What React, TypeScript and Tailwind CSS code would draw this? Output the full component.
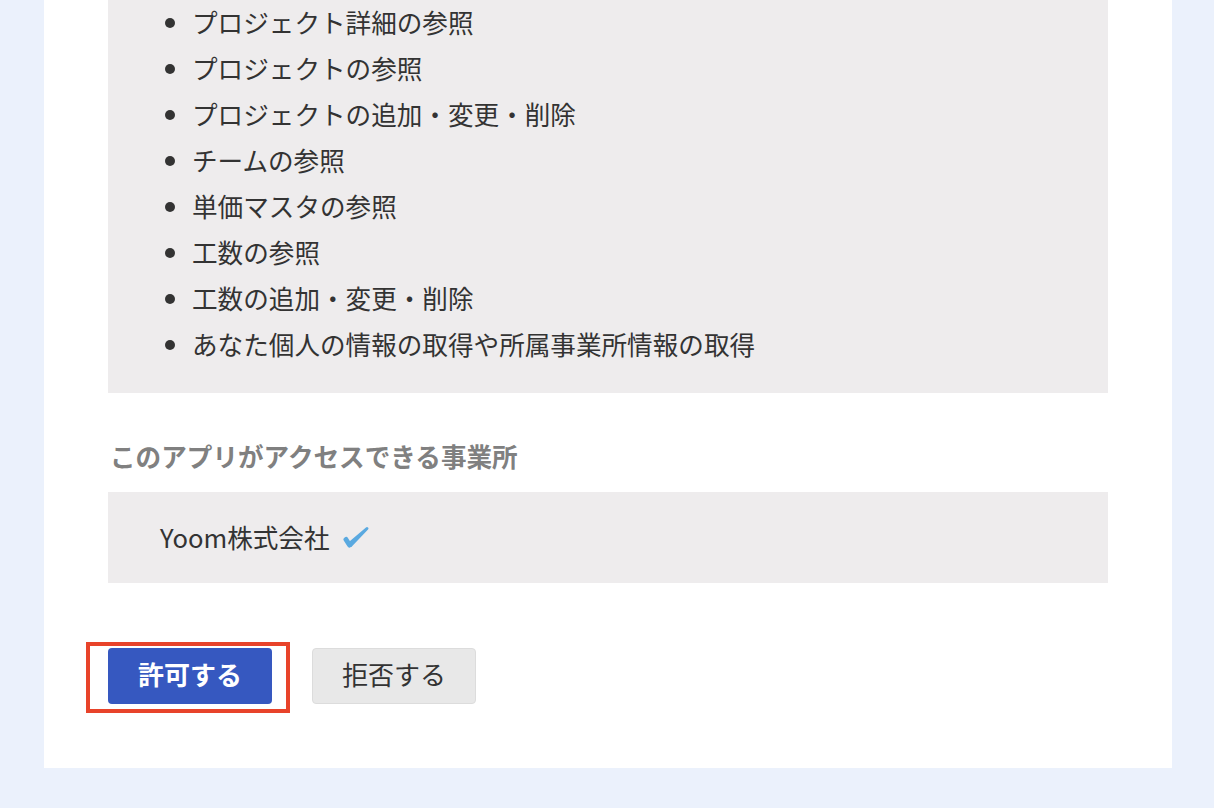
const permissions = [
  "プロジェクト詳細の参照",
  "プロジェクトの参照",
  "プロジェクトの追加・変更・削除",
  "チームの参照",
  "単価マスタの参照",
  "工数の参照",
  "工数の追加・変更・削除",
  "あなた個人の情報の取得や所属事業所情報の取得",
];

// brush-style heavy check
const CheckMark = () => (
  <svg width="27" height="23" viewBox="0 0 27 23" className="ml-[13px]">
    <line
      x1="3"
      y1="13.5"
      x2="6.5"
      y2="19"
      stroke="#5aa9e0"
      strokeWidth="5"
      strokeLinecap="round"
    />
    <path
      d="M4.65 17.04 L22.97 1.41 A1.5 1.5 0 0 1 25.03 3.59 L8.35 20.96 Z"
      fill="#5aa9e0"
    />
  </svg>
);

export default function App() {
  return (
    <div
      className="min-h-screen bg-[#ebf1fc] pl-[44px] pr-[42px] pb-[40px]"
      style={{ fontFamily: '"Noto Sans CJK JP", "Noto Sans", sans-serif' }}
    >
      <div className="bg-white px-[64px] pb-[64px]">
        {/* scopes */}
        <div className="w-[1000px] bg-[#eeeced] pb-[26px]">
          <ul className="-mt-px list-disc pl-[84px] text-[25.6px] leading-[46px] text-[#333] marker:text-[#333]">
            {permissions.map((p) => (
              <li key={p}>{p}</li>
            ))}
          </ul>
        </div>

        <h2 className="mt-[40px] mb-[13px] pl-[2px] text-[25.6px] font-bold leading-[46px] text-[#808080]">
          このアプリがアクセスできる事業所
        </h2>

        <div className="flex h-[91px] w-[1000px] items-center bg-[#eeeced] pl-[52px]">
          <span className="text-[25.6px] text-[#333]">Yoom株式会社</span>
          <CheckMark />
        </div>

        <div className="mt-[65px] flex items-center gap-[40px]">
          <div className="relative">
            <button
              type="button"
              className="h-[56px] w-[164px] rounded-[4px] bg-[#3658c0] pb-[5px] text-[26px] font-bold text-white"
            >
              許可する
            </button>
            <div className="pointer-events-none absolute left-[-22px] top-[-6px] h-[71px] w-[204px] border-4 border-[#e8432a]" />
          </div>
          <button
            type="button"
            className="h-[56px] w-[164px] rounded-[4px] border border-[#dcdcdc] bg-[#e8e8e8] pb-[5px] text-[26px] text-[#333]"
          >
            拒否する
          </button>
        </div>
      </div>
    </div>
  );
}
